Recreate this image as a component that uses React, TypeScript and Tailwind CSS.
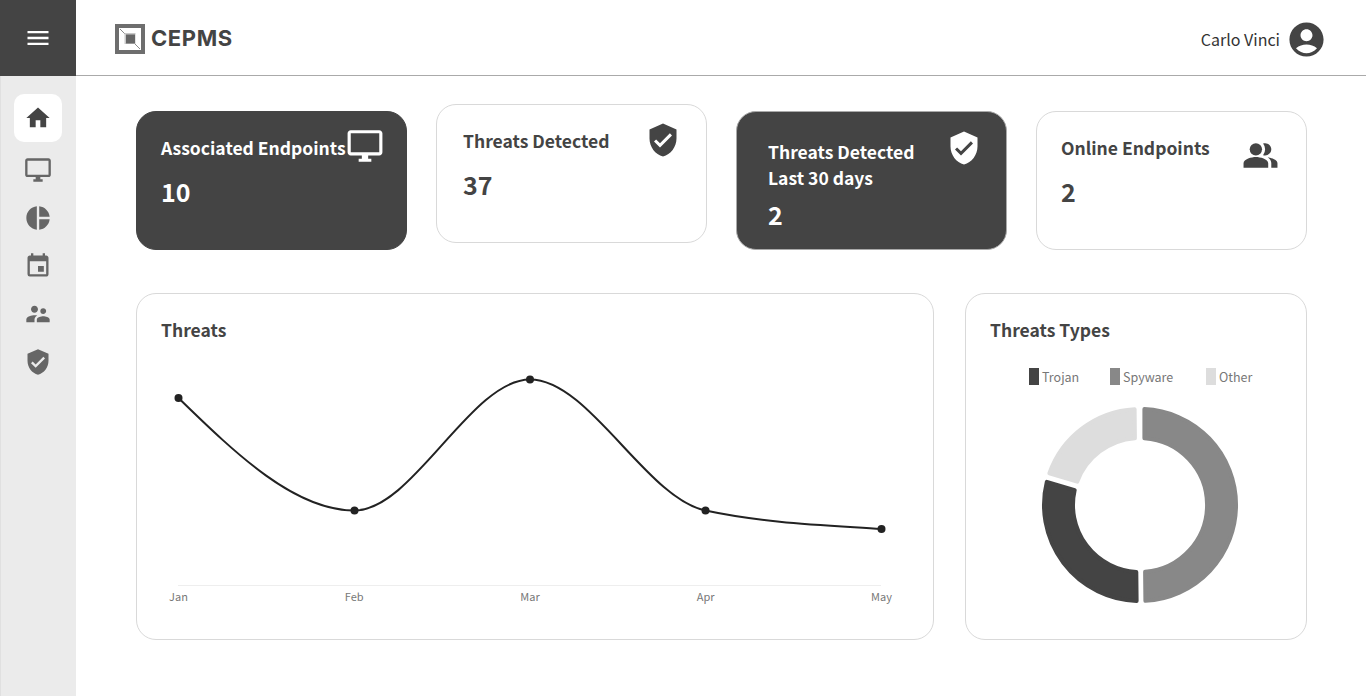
import React from 'react';
import {
  MdMenu,
  MdHome,
  MdOutlineDesktopWindows,
  MdPieChart,
  MdEvent,
  MdSupervisorAccount,
  MdVerifiedUser,
  MdPeopleAlt,
  MdAccountCircle,
} from 'react-icons/md';

const FONT = "font-['Noto_Sans_CJK_SC','Noto_Sans',sans-serif]";

function Logo() {
  return (
    <svg width="30" height="30" viewBox="0 0 30 30">
      <rect x="0" y="0" width="30" height="30" fill="#6e6e6e" />
      <rect x="4" y="4" width="22" height="22" fill="#ffffff" />
      <path d="M5 5L25 25" stroke="#8a8a8a" strokeWidth="1" />
      <rect x="9.5" y="9" width="11" height="11" fill="#c8c8c8" />
      <rect x="11" y="10.5" width="9" height="9" fill="#666666" />
    </svg>
  );
}

function StatCard({
  children,
  icon,
  className,
}: {
  children: React.ReactNode;
  icon: React.ReactNode;
  className: string;
}) {
  return (
    <div className={`relative w-[271px] h-[139px] rounded-[20px] border ${className}`}>
      {children}
      {icon}
    </div>
  );
}

function sector(cx: number, cy: number, ro: number, ri: number, a0: number, a1: number, gap: number) {
  // gap is measured in px at each radius so the edges stay parallel
  const pt = (r: number, a: number) => {
    const t = ((a - 90) * Math.PI) / 180;
    return `${(cx + r * Math.cos(t)).toFixed(2)} ${(cy + r * Math.sin(t)).toFixed(2)}`;
  };
  const dOut = ((gap / ro) * 180) / Math.PI;
  const dIn = ((gap / ri) * 180) / Math.PI;
  const large = a1 - a0 > 180 ? 1 : 0;
  return [
    `M${pt(ro, a0 + dOut)}`,
    `A${ro} ${ro} 0 ${large} 1 ${pt(ro, a1 - dOut)}`,
    `L${pt(ri, a1 - dIn)}`,
    `A${ri} ${ri} 0 ${large} 0 ${pt(ri, a0 + dIn)}`,
    'Z',
  ].join(' ');
}

const slices = [
  { from: 0, to: 179.4, color: '#888888' },
  { from: 179.4, to: 286.6, color: '#444444' },
  { from: 286.6, to: 359.4, color: '#dddddd' },
];

const legend = [
  { label: 'Trojan', color: '#444444', w: 'w-[81px]' },
  { label: 'Spyware', color: '#888888', w: 'w-[96px]' },
  { label: 'Other', color: '#dddddd', w: 'w-[50px]' },
];

const points = [
  [178.5, 398],
  [354.5, 510.5],
  [530, 379.5],
  [705.5, 510.5],
  [881.5, 529],
];

const months = ['Jan', 'Feb', 'Mar', 'Apr', 'May'];

const navIcons = [MdOutlineDesktopWindows, MdPieChart, MdEvent, MdSupervisorAccount, MdVerifiedUser];

const titleClass = 'text-[17.5px] font-bold leading-[30px]';
const valueClass = 'text-[25px] font-bold leading-[40px] mt-[8px]';
const darkCard = 'bg-[#444444] text-white';
const lightCard = 'bg-white text-[#444444] border-[#d9d9d9]';

export default function App() {
  return (
    <div className={`h-screen flex flex-col bg-white overflow-hidden ${FONT}`}>
      {/* Header */}
      <header className="h-[76px] flex shrink-0 border-b border-[#aaaaaa] bg-white">
        <div className="w-[76px] h-[76px] bg-[#444444] flex items-center justify-center shrink-0">
          <MdMenu size={28} color="#ffffff" />
        </div>
        <div className="flex-1 flex items-center justify-between pl-[39px] pr-[39px] pt-[2px]">
          <div className="flex items-center gap-[6px]">
            <Logo />
            <span className="font-['Inter',sans-serif] font-bold text-[22px] tracking-[0.6px] text-[#444444]">CEPMS</span>
          </div>
          <div className="flex items-center gap-[6px]">
            <span className="text-[16px] text-[#333333]">Carlo Vinci</span>
            <MdAccountCircle size={41} color="#444444" className="mt-[1px]" />
          </div>
        </div>
      </header>

      <div className="flex-1 flex min-h-0">
        {/* Sidebar */}
        <aside className="w-[76px] shrink-0 bg-[#ebebeb] border-l border-[#e0e0e0] flex flex-col items-center pt-[18px] pr-[1px]">
          <div className="w-[48px] h-[48px] rounded-[10px] bg-white flex items-center justify-center mb-[4px]">
            <MdHome size={28} color="#444444" />
          </div>
          {navIcons.map((Icon, i) => (
            <div key={i} className="h-[48px] w-[48px] flex items-center justify-center">
              <Icon size={28} color="#666666" />
            </div>
          ))}
        </aside>

        {/* Content */}
        <main className="flex-1 pl-[60px] pr-[59px] pt-[28px]">
          <div className="flex items-start justify-between">
            <StatCard
              className={`${darkCard} border-[#444444] mt-[7px]`}
              icon={<MdOutlineDesktopWindows size={38} className="absolute left-[209px] top-[15px]" />}
            >
              <div className="pl-[24px] pt-[21px]">
                <div className={titleClass}>Associated Endpoints</div>
                <div className={valueClass}>10</div>
              </div>
            </StatCard>
            <StatCard
              className={lightCard}
              icon={<MdVerifiedUser size={36} className="absolute left-[208px] top-[17px]" />}
            >
              <div className="pl-[26px] pt-[21px]">
                <div className={titleClass}>Threats Detected</div>
                <div className={valueClass}>37</div>
              </div>
            </StatCard>
            <StatCard
              className={`${darkCard} border-[#aaaaaa] mt-[7px]`}
              icon={<MdVerifiedUser size={36} className="absolute left-[209px] top-[18px]" />}
            >
              <div className="pl-[31px] pt-[27px]">
                <div className="text-[17.5px] font-bold leading-[26px]">
                  Threats Detected
                  <br />
                  Last 30 days
                </div>
                <div className="text-[25px] font-bold leading-[40px] mt-[3px]">2</div>
              </div>
            </StatCard>
            <StatCard
              className={`${lightCard} mt-[7px]`}
              icon={<MdPeopleAlt size={37} className="absolute left-[205px] top-[25px]" />}
            >
              <div className="pl-[24px] pt-[21px]">
                <div className={titleClass}>Online Endpoints</div>
                <div className={valueClass}>2</div>
              </div>
            </StatCard>
          </div>

          <div className="flex justify-between mt-[43px]">
            {/* Line chart */}
            <section className="w-[798px] h-[347px] rounded-[20px] border border-[#d9d9d9] flex flex-col">
              <h2 className="pl-[24px] pt-[21px] text-[17.5px] leading-[30px] font-bold text-[#444444]">Threats</h2>
              <svg width="796" height="238" viewBox="137 348 796 238" className="mt-[3px] shrink-0">
                <line x1="178" y1="585.5" x2="881" y2="585.5" stroke="#eeeeee" />
                <path
                  d="M178.5 398C237 455 295 510.5 354.5 510.5C413 510.5 471 379.5 530 379.5C589 379.5 646 498 705.5 510.5C764 523 822 525 881.5 529"
                  fill="none"
                  stroke="#222222"
                  strokeWidth="2"
                />
                {points.map(([x, y]) => (
                  <circle key={x} cx={x} cy={y} r="4" fill="#222222" />
                ))}
              </svg>
              <div className="flex justify-between pl-[21px] pr-[31px] mt-[1px]">
                {months.map((m) => (
                  <span key={m} className="w-[41px] text-[11px] leading-[18px] text-[#777777] text-center">
                    {m}
                  </span>
                ))}
              </div>
            </section>

            {/* Donut */}
            <section className="w-[342px] h-[347px] rounded-[20px] border border-[#d9d9d9] flex flex-col">
              <h2 className="pl-[24px] pt-[21px] text-[17.5px] leading-[30px] font-bold text-[#444444]">Threats Types</h2>
              <div className="flex pl-[63px] mt-[23px]">
                {legend.map((l) => (
                  <div key={l.label} className={`flex items-center gap-[3px] ${l.w}`}>
                    <span className="w-[10px] h-[17px] shrink-0" style={{ backgroundColor: l.color }} />
                    <span className="text-[12.5px] leading-[17px] text-[#777777]">{l.label}</span>
                  </div>
                ))}
              </div>
              <svg width="200" height="200" viewBox="1040 405 200 200" className="mt-[20px] ml-[74px]">
                {slices.map((s) => (
                  <path
                    key={s.color}
                    d={sector(1140, 505, 96, 67, s.from, s.to, 4.4)}
                    fill={s.color}
                    stroke={s.color}
                    strokeWidth="4"
                    strokeLinejoin="round"
                  />
                ))}
              </svg>
            </section>
          </div>
        </main>
      </div>
    </div>
  );
}
